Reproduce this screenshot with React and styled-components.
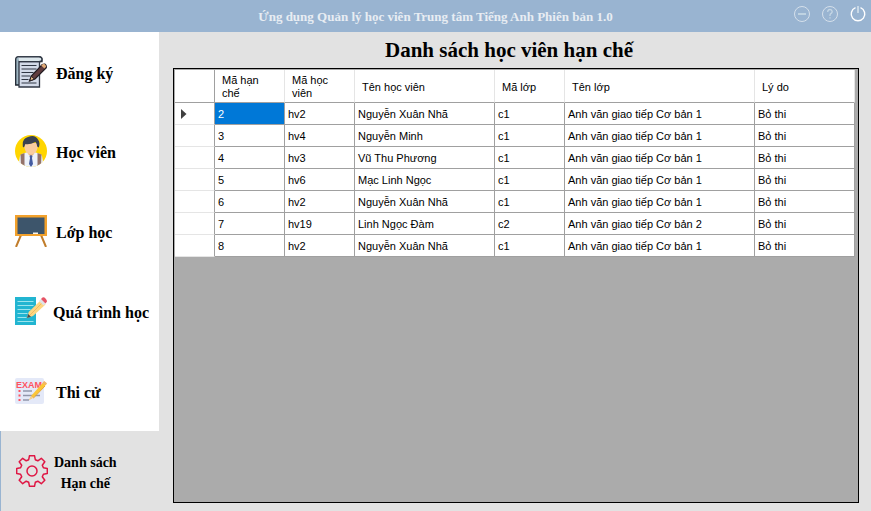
import React from "react";
import styled, { createGlobalStyle, css } from "styled-components";

const Global = createGlobalStyle`
  *, *::before, *::after { box-sizing: border-box; }
  body { margin: 0; background: #e2e2e2; color: #000; }
  button { font: inherit; color: inherit; border: 0; padding: 0; background: none; cursor: pointer; }
`;

const Window = styled.div`
  display: flex;
  flex-direction: column;
  min-height: 100vh;
  font-family: "Liberation Serif", "Times New Roman", serif;
`;

const TitleBar = styled.header`
  display: grid;
  grid-template-columns: 1fr auto 1fr;
  align-items: center;
  height: 32px;
  padding: 0 4px;
  background: #99b4d1;
`;

const AppName = styled.div`
  grid-column: 2;
  padding-top: 2px;
  font-size: 13px;
  font-weight: bold;
  line-height: 18px;
  color: #e8edf3;
  white-space: nowrap;
`;

const WindowControls = styled.div`
  display: flex;
  justify-content: flex-end;
  gap: 10px;
  padding-bottom: 4px;
`;

const ControlButton = styled.button`
  width: 18px;
  height: 18px;
  svg { display: block; }
`;

const Body = styled.div`
  flex: 1;
  display: grid;
  grid-template-columns: 159px 1fr;
`;

const Sidebar = styled.nav`
  display: flex;
  flex-direction: column;
  background: #fff;
`;

const NavItem = styled.button`
  display: flex;
  align-items: center;
  gap: 9px;
  height: 80px;
  padding-left: 15px;
  font-size: 16px;
  font-weight: bold;
  line-height: 21px;
  text-align: left;
  white-space: nowrap;

  &:first-child { height: 79px; }

  svg { flex: none; }

  ${(p) => p.$wide && css`gap: 6px;`}
  ${(p) => p.$active && css`
    flex: 1;
    gap: 6px;
    min-height: 80px;
    font-size: 14px;
    text-align: center;
    background: #e2e2e2;
    border-left: 1px solid #99b4d1;
  `}
`;

const NavLabel = styled.span`
  padding-top: 3px;
  white-space: pre-line;
`;

const Main = styled.main`
  display: flex;
  flex-direction: column;
  min-width: 0;
  padding: 0 12px 8px 14px;
`;

const Heading = styled.h1`
  margin: 0;
  padding: 6px 14px 6px 0;
  font-size: 21px;
  line-height: 24px;
  text-align: center;
`;

const GridFrame = styled.section`
  flex: 1;
  padding: 1px;
  overflow: auto;
  background: #ababab;
  border: 1px solid #000;
`;

const Grid = styled.table`
  table-layout: fixed;
  width: 680px;
  border-spacing: 0;
  background: #fff;
  font-family: "Liberation Sans", Arial, sans-serif;
  font-size: 11px;
  line-height: 13px;
`;

const HeadRow = styled.tr`
  height: 33px;
`;

const Row = styled.tr`
  height: 22px;
`;

const HeadCell = styled.th`
  padding: 2px 7px 0;
  border-right: 1px solid #e5e5e5;
  border-bottom: 1px solid #a0a0a0;
  font-weight: normal;
  text-align: left;
  vertical-align: middle;
`;

const CornerCell = styled.td`
  border-right: 1px solid #a0a0a0;
  border-bottom: 1px solid #a0a0a0;
`;

const MarkerCell = styled.td`
  padding: 0 0 0 6px;
  border-right: 1px solid #a0a0a0;
  border-bottom: 1px solid #e5e5e5;
  svg { display: block; }
`;

const Cell = styled.td`
  padding: 1px 3px 0;
  border-right: 1px solid #a0a0a0;
  border-bottom: 1px solid #a0a0a0;
  white-space: nowrap;
  ${(p) => p.$selected && css`
    color: #fff;
    background: #0078d7;
  `}
`;

const Icon = ({ children }) => (
  <svg width="32" height="32" viewBox="0 0 32 32" aria-hidden="true">{children}</svg>
);

const RegisterIcon = () => (
  <Icon>
    <path d="M.7 3.500Q.7.7 3.500.7H24q3 0 3 3v2H6V29H.7Z" fill="#9fb6c3" stroke="#202833" strokeWidth="1.3" />
    <path d="M4 5.500h20.500V31H4Z" fill="#d3dae8" stroke="#303744" strokeWidth="1.3" />
    <path d="M3.500.8H24q3 0 3 2.400T24 5.700H4" fill="#dce7ec" stroke="#303744" strokeWidth="1.3" />
    <path d="M6.500 9.500h15M6.500 13h15M6.500 16.500h12M6.500 20h9M6.500 23.500h7M6.500 27h15" stroke="#303744" strokeWidth="1.2" />
    <path d="m14.500 25 2-5.200L27.300 8.600q3-1.700 4 1.500v1.600L20 23Z" fill="#603c3e" stroke="#211c22" strokeWidth="1.2" />
    <path d="m14.600 25 1.700-4.800 3.200 3Z" fill="#e7b986" stroke="#211c22" />
    <path d="m26.200 9.500 2-1.800q2.200-.4 3 2.700l-1.800 2Z" fill="#e1aa76" />
  </Icon>
);

const StudentIcon = () => (
  <Icon>
    <defs><clipPath id="avatar"><circle cx="16" cy="16" r="16" /></clipPath></defs>
    <g clipPath="url(#avatar)">
      <path d="M0 0h32v32H0Z" fill="#ffd500" />
      <path d="M3 32 5 21q.5-2 3-2.500l5-1.500h6l5 1.500q2.500.5 3 2.500l2 11Z" fill="#edf2fb" />
      <path d="M13 14h6v5l-3 3-3-3Z" fill="#e9b889" />
      <path d="M9.500 8h13v5q-1.500 6.500-6.500 6.500T9.500 13Z" fill="#f8cca0" />
      <path d="M8 12.500Q6.500 3.500 13 2q7-3 10 2.500 2.500 3 .8 8l-1.600-1Q22 8.500 20.500 7 14 10 10.500 9q-.8 1-1 2.500Z" fill="#3a4250" />
      <path d="M5.500 19.500 9.500 18v14h-3.500ZM22.500 18l4 1.500-.5 12.500h-3.500Z" fill="#94736a" />
      <path d="m14.500 21 1.500-1 1.500 1-.5 2 1 6-2 3-2-3 1-6Z" fill="#435ba0" />
    </g>
  </Icon>
);

const ClassIcon = () => (
  <Icon>
    <path d="m6 20-5 12M26 20l5 12" stroke="#c17d2b" strokeWidth="2" />
    <path d="M0 0h32v21H0Z" fill="#f2a12c" />
    <path d="M2.500 2.500h27v16.500h-27Z" fill="#3d556b" />
    <path d="M18 17.500h5v1.500h-5Z" fill="#f5f5f0" />
  </Icon>
);

const ProcessIcon = () => (
  <Icon>
    <path d="M0 2h21v28H0Z" fill="#22b5d1" />
    <path d="M2.500 6.500h16M2.500 10.500h16M2.500 14.500h13M2.500 18.500h10M2.500 22.500h9M2.500 26.500h16" stroke="#9be4ed" strokeWidth="1" />
    <path d="m12 23 1.700-6L26 5l4.500 4.500L18 21Z" fill="#ffd782" />
    <path d="m15 20 12.500-12.500" stroke="#f1bb62" strokeWidth="1" />
    <path d="m12 23 1.200-4 2.800 2.700Z" fill="#484a50" />
    <path d="m24 6 2-2 4.500 4.500-2 2Z" fill="#dfe4e8" />
    <path d="m26 4 1.500-1.500q1.500-.7 3 1t1.500 3L30.500 8.500Z" fill="#e65365" />
  </Icon>
);

const ExamText = styled.text`
  font: bold 9px "Liberation Sans", Arial, sans-serif;
  fill: #ff5260;
`;

const ExamIcon = () => (
  <Icon>
    <rect x="0" y="3" width="29" height="26" rx="2" fill="#e4e9f8" />
    <ExamText x="1" y="13">EXAM</ExamText>
    <path d="M3.500 16h2M3.500 20.500h2M3.500 25h2" stroke="#ff5260" strokeWidth="2" />
    <path d="M8 16h9M8 20.500h17M8 25h6" stroke="#9096aa" strokeWidth="1.3" />
    <path d="m14 25 2.500-4.500L29 6.500l3 2.200L18.500 22.500Z" fill="#fbc638" />
    <path d="m16 21 2.500 2L30 11" fill="none" stroke="#eaa72e" />
    <path d="m14 25 2.400-4 2 1.500Z" fill="#f4cf99" />
    <path d="m27.500 8 1.700-2 2.800 2.200L30 10Z" fill="#f1b66c" />
  </Icon>
);

const GearIcon = () => (
  <Icon>
    <g fill="none" stroke="#df1744" strokeWidth="1.5" strokeLinejoin="round">
      <path d="M13.500.7h5l.8 4 2.500 1.100 3.500-2.500 3.500 3.500-2.500 3.500 1.100 2.500 3.900.7v5l-3.900.7-1.100 2.500 2.500 3.500-3.500 3.500-3.500-2.500-2.500 1.100-.8 4h-5l-.8-4-2.500-1.100-3.500 2.500-3.500-3.500 2.500-3.500-1.100-2.500-3.900-.7v-5l3.900-.7 1.100-2.500-2.500-3.500 3.500-3.500 3.500 2.500 2.500-1.100Z" />
      <circle cx="16" cy="16" r="5" />
    </g>
  </Icon>
);

const ControlIcon = ({ children }) => (
  <svg width="18" height="18" viewBox="0 0 18 18" fill="none" aria-hidden="true">{children}</svg>
);

const navItems = [
  { label: "Đăng ký", icon: RegisterIcon },
  { label: "Học viên", icon: StudentIcon },
  { label: "Lớp học", icon: ClassIcon },
  { label: "Quá trình học", icon: ProcessIcon, wide: true },
  { label: "Thi cử", icon: ExamIcon },
  { label: "Danh sách\nHạn chế", icon: GearIcon, active: true },
];

const columns = [
  { title: "Mã hạn chế", width: 70 },
  { title: "Mã học viên", width: 70 },
  { title: "Tên học viên", width: 140 },
  { title: "Mã lớp", width: 70 },
  { title: "Tên lớp", width: 190 },
  { title: "Lý do", width: 100 },
];

const rows = [
  ["2", "hv2", "Nguyễn Xuân Nhã", "c1", "Anh văn giao tiếp Cơ bản 1", "Bỏ thi"],
  ["3", "hv4", "Nguyễn Minh", "c1", "Anh văn giao tiếp Cơ bản 1", "Bỏ thi"],
  ["4", "hv3", "Vũ Thu Phương", "c1", "Anh văn giao tiếp Cơ bản 1", "Bỏ thi"],
  ["5", "hv6", "Mạc Linh Ngọc", "c1", "Anh văn giao tiếp Cơ bản 1", "Bỏ thi"],
  ["6", "hv2", "Nguyễn Xuân Nhã", "c1", "Anh văn giao tiếp Cơ bản 1", "Bỏ thi"],
  ["7", "hv19", "Linh Ngọc Đàm", "c2", "Anh văn giao tiếp Cơ bản 2", "Bỏ thi"],
  ["8", "hv2", "Nguyễn Xuân Nhã", "c1", "Anh văn giao tiếp Cơ bản 1", "Bỏ thi"],
];

export default function App() {
  return (
    <Window>
      <Global />
      <TitleBar>
        <AppName>Ứng dụng Quản lý học viên Trung tâm Tiếng Anh Phiên bản 1.0</AppName>
        <WindowControls>
          <ControlButton type="button" aria-label="Thu nhỏ">
            <ControlIcon>
              <circle cx="9" cy="9" r="7.5" stroke="#d5e0eb" />
              <path d="M5 9h8" stroke="#bfd3e2" strokeWidth="2" />
            </ControlIcon>
          </ControlButton>
          <ControlButton type="button" aria-label="Trợ giúp">
            <ControlIcon>
              <circle cx="9" cy="9" r="7.5" stroke="#d5e0eb" />
              <path d="M6.800 7V6q.4-1.500 2.200-1.500T11.200 6.500q0 1.200-1.100 1.900T9 10.300v.7M9 12.300v1.200" stroke="#c6d7e5" strokeWidth="1.3" />
            </ControlIcon>
          </ControlButton>
          <ControlButton type="button" aria-label="Thoát">
            <ControlIcon>
              <path d="M6.500 2.700a6.800 6.800 0 1 0 5 0" stroke="#fff" strokeWidth="1.4" />
              <path d="M9 1v7" stroke="#d5e2ec" strokeWidth="1.6" />
            </ControlIcon>
          </ControlButton>
        </WindowControls>
      </TitleBar>
      <Body>
        <Sidebar>
          {navItems.map(({ label, icon: ItemIcon, wide, active }) => (
            <NavItem key={label} type="button" $wide={wide} $active={active} aria-current={active ? "page" : undefined}>
              <ItemIcon />
              <NavLabel>{label}</NavLabel>
            </NavItem>
          ))}
        </Sidebar>
        <Main>
          <Heading>Danh sách học viên hạn chế</Heading>
          <GridFrame>
            <Grid>
              <colgroup>
                <col width="40" />
                {columns.map((c) => <col key={c.title} width={c.width} />)}
              </colgroup>
              <thead>
                <HeadRow>
                  <CornerCell />
                  {columns.map((c) => <HeadCell key={c.title} scope="col">{c.title}</HeadCell>)}
                </HeadRow>
              </thead>
              <tbody>
                {rows.map((row, r) => (
                  <Row key={row[0]}>
                    <MarkerCell>
                      {r === 0 && (
                        <svg width="6" height="10" viewBox="0 0 6 10" aria-hidden="true">
                          <path d="M0 0v10l5.500-5Z" fill="#404040" />
                        </svg>
                      )}
                    </MarkerCell>
                    {row.map((value, c) => (
                      <Cell key={c} $selected={r === 0 && c === 0}>{value}</Cell>
                    ))}
                  </Row>
                ))}
              </tbody>
            </Grid>
          </GridFrame>
        </Main>
      </Body>
    </Window>
  );
}
